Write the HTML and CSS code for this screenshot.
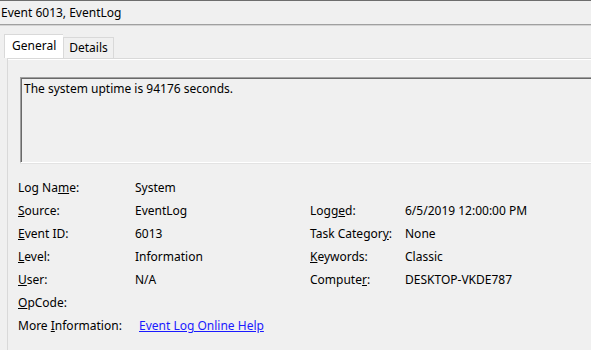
FILE: index.html
```html
<!DOCTYPE html>
<html lang="en">

<head>
  <meta charset="UTF-8" />
  <title>Event 6013, EventLog</title>
  <link rel="stylesheet" href="styles.css">
</head>

<body>
  <div class="title">Event 6013, EventLog</div>
  <div class="sep"></div>

  <div class="tabs">
    <div class="tab active">General</div>
    <div class="tab">Details</div>
  </div>

  <div class="panel">
    <div class="desc">The system uptime is 94176 seconds.</div>

    <div class="fields">
      <span>Log Na<u>m</u>e:</span><span>System</span><span></span><span></span>
      <span><u>S</u>ource:</span><span>EventLog</span><span>Logg<u>e</u>d:</span><span>6/5/2019 12:00:00 PM</span>
      <span><u>E</u>vent ID:</span><span>6013</span><span>Task Categor<u>y</u>:</span><span>None</span>
      <span><u>L</u>evel:</span><span>Information</span><span><u>K</u>eywords:</span><span>Classic</span>
      <span><u>U</u>ser:</span><span>N/A</span><span>Compute<u>r</u>:</span><span>DESKTOP-VKDE787</span>
      <span><u>O</u>pCode:</span><span></span><span></span><span></span>
      <span>More <u>I</u>nformation:</span><span><a class="link">Event Log Online Help</a></span><span></span><span></span>
    </div>
  </div>
</body>

</html>
```

FILE: styles.css
```css
body {
  margin: 0;
  background: #f0f0f0;
  font-family: 'Noto Sans', 'Open Sans', sans-serif;
  font-size: 12px;
  color: #000;
  overflow: hidden;
}

.title {
  height: 23px;
  line-height: 23px;
  padding-left: 1px;
  border-top: 1px solid #6d6d6d;
}

.sep {
  height: 1px;
  background: #a0a0a0;
  border-bottom: 1px solid #d4d4d4;
}

.tabs {
  display: flex;
  align-items: flex-end;
  height: 32px;
  padding-left: 4px;
}

.tab {
  height: 20px;
  line-height: 20px;
  padding: 0 5px;
  background: #f0f0f0;
  border: 1px solid #d9d9d9;
  border-bottom: none;
}

.tab.active {
  height: 23px;
  line-height: 22px;
  padding: 0 7px;
  background: #fff;
  border-right: none;
  position: relative;
  z-index: 1;
}

.panel {
  margin-left: 7px;
  height: 300px;
  border-left: 1px solid #d9d9d9;
  border-top: 1px solid #d9d9d9;
  box-shadow: inset 0 1px #fff;
  padding-left: 10px;
}

/* the text box runs on past the right edge of the window, so no right border */
.desc {
  margin: 18px 0 0 2px;
  width: 564px;
  height: 80px;
  padding: 2px 3px;
  border-top: 1px solid #a0a0a0;
  border-left: 1px solid #a0a0a0;
  border-bottom: 1px solid #fff;
  box-shadow: inset 1px 1px #696969, 0 1px #e3e3e3;
}

.fields {
  display: grid;
  grid-template-columns: 117px 175px 95px auto;
  grid-auto-rows: 23px;
  align-items: center;
  margin-top: 13px;
}

.link {
  margin-left: 4px;
  color: #1a1aff;
  text-decoration: underline;
  cursor: pointer;
}
```
